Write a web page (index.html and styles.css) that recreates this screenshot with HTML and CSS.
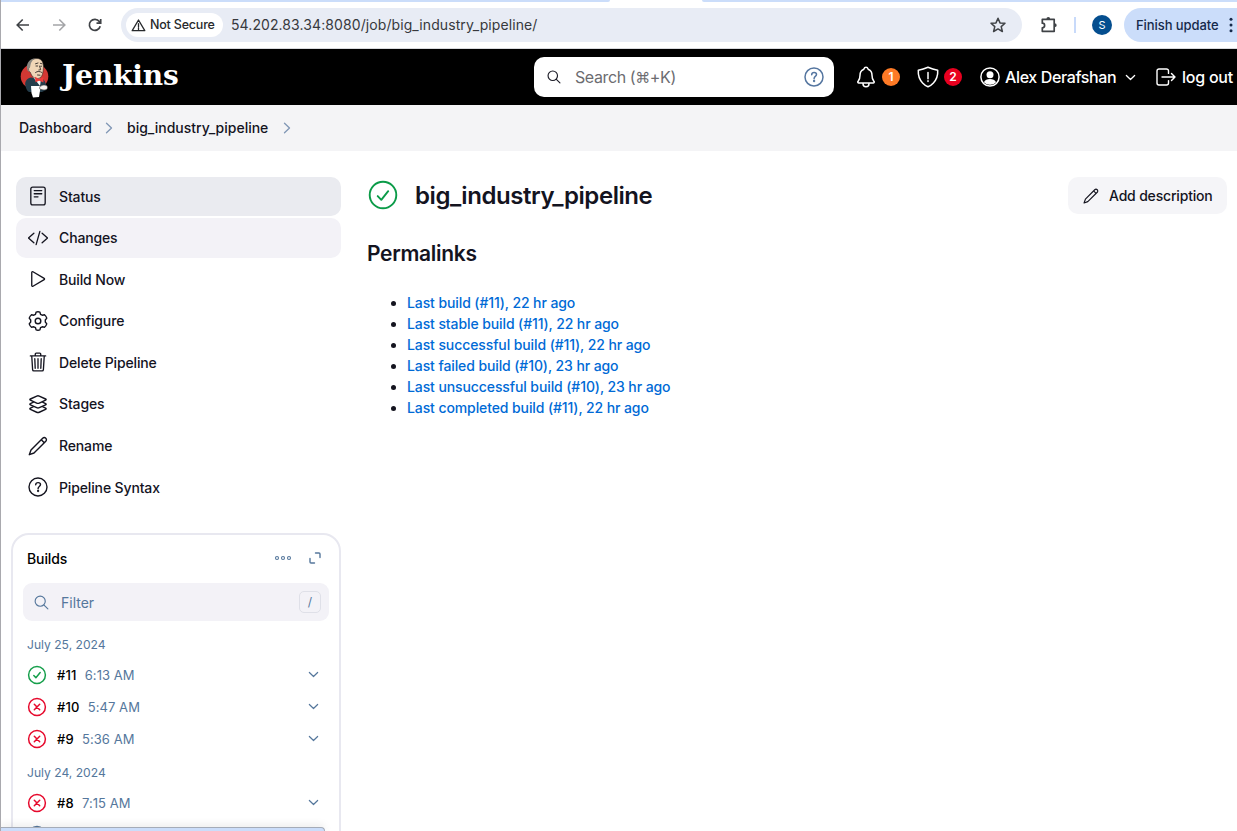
FILE: index.html
```html
<!DOCTYPE html>
<html lang="en">
<head>
<meta charset="utf-8">
<title>big_industry_pipeline [Jenkins]</title>
<link rel="stylesheet" href="styles.css">
</head>
<body>
<svg width="0" height="0" class="defs">
  <symbol id="chev" viewBox="0 0 12 12"><path d="M1.5 3.8 6 8.2l4.500-4.400"/></symbol>
  <symbol id="right" viewBox="0 0 12 12"><path d="M3.500 1.200 8.500 6l-5 4.800"/></symbol>
  <symbol id="ok" viewBox="0 0 20 20"><circle cx="10" cy="10" r="8.400"/><path d="m6.800 10.500 2.100 2.200 4.300-5.200"/></symbol>
  <symbol id="fail" viewBox="0 0 20 20"><circle cx="10" cy="10" r="8.400"/><path d="m7.300 7.300 5.400 5.400m0-5.400-5.400 5.400"/></symbol>
  <symbol id="pencil" viewBox="0 0 20 20"><path d="M1.300 18.700 3 14 14.700 2.200a2.150 2.150 0 0 1 3.100 3.100L6 17zM13.300 3.700l3 3"/></symbol>
  <symbol id="search" viewBox="0 0 16 16"><circle cx="6.600" cy="6.600" r="5.400"/><path d="m10.700 10.700 4.100 4.100"/></symbol>
  <symbol id="help" viewBox="0 0 20 20"><circle cx="10" cy="10" r="9"/><path d="M7.700 7.700C7.800 6.300 8.800 5.600 10.100 5.600c1.400 0 2.400.8 2.400 2 0 1.800-2.400 1.900-2.400 3.800v.3"/><circle cx="10.100" cy="14" r=".45"/></symbol>
</svg>
<div class="window">
  <div class="tabs"><i class="tab-left"></i><i class="tab-right"></i></div>
  <div class="toolbar">
    <svg class="nav back" viewBox="0 0 16 16"><path d="M14 8H2.500M7.700 2.500 2.200 8l5.500 5.500"/></svg>
    <svg class="nav forward" viewBox="0 0 16 16"><path d="M2 8h11.500M8.300 2.500 13.800 8l-5.500 5.500"/></svg>
    <svg class="nav reload" viewBox="0 0 16 16"><path d="M13.200 9.200A5.500 5.500 0 1 1 12.300 4.600L13.700 6M13.700 2v4.200H9.500"/></svg>
    <div class="address">
      <div class="secure"><svg viewBox="0 0 16 14"><path d="M8 1.700 14.700 13H1.300zM8 5.500v3.700m0 1.100v1.400"/></svg><span>Not Secure</span></div>
      <span class="url">54.202.83.34:8080/job/big_industry_pipeline/</span>
      <svg class="star" viewBox="0 0 18 18"><path d="m9 2.200 2 4.700 5 .4-3.800 3.300 1.200 4.900L9 12.900l-4.400 2.600 1.200-4.900L2 7.300l5-.4z"/></svg>
    </div>
    <svg class="puzzle" viewBox="0 0 18 18"><path d="M2.300 3.300h11.900v12H2.300v-3.500a2.300 2.300 0 0 0 0-4.600z"/><path class="fill" d="M6.400 3.200a1.900 2.200 0 0 1 3.800 0zM14.500 7.300a2.200 1.900 0 0 1 0 3.800z"/></svg>
    <i class="divider"></i>
    <span class="avatar">S</span>
    <div class="update"><span>Finish update</span><svg viewBox="0 0 4 16"><circle cx="2" cy="2.300" r="1.500"/><circle cx="2" cy="8" r="1.500"/><circle cx="2" cy="13.700" r="1.500"/></svg></div>
  </div>
  <header class="header">
    <svg class="butler" viewBox="0 0 29 41">
      <ellipse cx="14.500" cy="19.500" rx="13.800" ry="12.800" fill="#d33833"/>
      <path d="M5.500 29C4 24 8 21 11 20.500l12 1.500c3 3 4 7 3 11l-4 2H9c-2-1-3-3.500-3.500-6z" fill="#243d4b"/>
      <path d="m13 20 8 2-1 7z" fill="#f8f8f8"/>
      <path d="M9 10c0-6 3.500-8.500 8-8.500 4.500 0 7 4 6.300 10-.2 6-1.800 9.500-5.300 10-4 .5-6.500-2.500-7.500-6-2-1-2.500-3-1.500-5.500z" fill="#f0d6b7" stroke="#332d29" stroke-width=".6"/>
      <path d="M7.500 13.500C5.500 7 9 2 15 1.300 11.500 3.500 10.500 7 10.300 9.500L8.500 12l.7 3z" fill="#8a8781"/>
      <path d="m15.500 6.800 2.500-.8m2.300.3 1.700.5M16 9h1.600m3 .2h1M19.500 9l1.200 3.700-1.900.3M15.500 15.500c2-1.700 4.500-1.200 6.500 0m-4.500 2.500 2.500.2" fill="none" stroke="#332d29" stroke-width=".9"/>
      <path d="m15 19.800 4 2.200 4.300-1.800.2 5.300-4.300-1.800-3.700 1.600z" fill="#ef3d3a"/>
      <path d="M11 29h9l.5 1.500-1.500 9.500-6 .5-1.500-4.500z" fill="#fff"/>
      <path d="M20 29.500c3-2 7.500-2 7.500 1s-4 3-7.500 1.500z" fill="#f7f3ee" stroke="#332d29" stroke-width=".5"/>
    </svg>
    <span class="brand">Jenkins</span>
    <div class="search"><svg class="mag"><use href="#search"/></svg><span class="hint">Search (<span class="cmd">⌘</span>+K)</span><svg class="help"><use href="#help"/></svg></div>
    <svg class="bell" viewBox="0 0 512 512"><path d="M427.680 351.430C402 320 383.870 304 383.870 217.350 383.870 138 343.350 109.730 310 96c-4.430-1.820-8.600-6-9.950-10.550C294.200 65.540 277.800 48 256 48s-38.210 17.550-44 37.470c-1.350 4.600-5.520 8.710-9.950 10.530-33.390 13.750-73.870 41.920-73.870 121.350C128.130 304 110 320 84.320 351.430 73.680 364.450 83 384 101.610 384h308.880c18.510 0 27.770-19.610 17.190-32.570zM320 384v16a64 64 0 0 1-128 0v-16"/></svg>
    <span class="badge orange">1</span>
    <svg class="shield" viewBox="0 0 512 512"><path d="M463.100 112.370C373.680 96.330 336.710 84.450 256 48c-80.710 36.450-117.680 48.330-207.100 64.370C32.700 369.130 240.580 457.790 256 464c15.420-6.210 223.300-94.870 207.100-351.630zM256 160v135m0 40v18"/></svg>
    <span class="badge red">2</span>
    <svg class="person" viewBox="0 0 20 20"><circle class="ring" cx="10" cy="10" r="9.100"/><circle cx="10" cy="7.700" r="3.500"/><path d="M3.900 15.200c1.100-2.300 3.300-3.200 6.100-3.200s5 .9 6.100 3.200A8 8 0 0 1 10 17.800a8 8 0 0 1-6.100-2.600z"/></svg>
    <span class="user">Alex Derafshan</span>
    <svg class="down"><use href="#chev"/></svg>
    <svg class="exit" viewBox="0 0 20 18"><path d="M12.500 5.400V3a2 2 0 0 0-2-2H3a2 2 0 0 0-2 2v12a2 2 0 0 0 2 2h7.500a2 2 0 0 0 2-2v-2.400M6 9h13M15.500 5.400 19 9l-3.500 3.600"/></svg>
    <span class="logout">log out</span>
  </header>
  <nav class="crumbs"><span class="c1">Dashboard</span><svg><use href="#right"/></svg><span class="c2">big_industry_pipeline</span><svg><use href="#right"/></svg></nav>
  <div class="body">
    <aside class="side">
      <div class="tasks">
        <a class="task active"><svg viewBox="0 0 512 512"><rect x="72" y="28" width="368" height="456" rx="48"/><path d="M160 118h192M160 198h192M160 278h96"/></svg><span>Status</span></a>
        <a class="task hover"><svg viewBox="0 0 512 512"><path d="M150 378 12 256l138-122M362 378l138-122-138-122M304 86l-96 340"/></svg><span>Changes</span></a>
        <a class="task"><svg viewBox="0 0 512 512"><path d="M96 91v330c0 17.440 17 28.520 31 20.160l287-168.370c12.120-7.250 12.120-26.330 0-33.580L127 70.840c-14-8.360-31 2.720-31 20.160z"/></svg><span>Build Now</span></a>
        <a class="task"><svg viewBox="0 0 20 20"><path d="M8.100 1.100Q10 .3 11.900 1.100L12.500 3.300 14.200 4.200 16.500 3.700Q18.100 5 18.800 7.100L17.300 9V11L18.800 12.900Q18.100 15 16.500 16.300L14.200 15.800 12.500 16.700 11.900 18.900Q10 19.700 8.100 18.900L7.500 16.700 5.800 15.800 3.500 16.300Q1.900 15 1.200 12.900L2.700 11V9L1.200 7.100Q1.900 5 3.500 3.700L5.800 4.200 7.500 3.300z" class="thin"/><circle class="thin" cx="10" cy="10" r="2.800"/></svg><span>Configure</span></a>
        <a class="task"><svg viewBox="0 0 512 512"><path d="m96 104 22 348c.95 18.490 14.400 32 32 32h212c17.670 0 30.870-13.510 32-32l22-348M60 100h392M186 100V52a24 24 0 0 1 24-24h92a24 24 0 0 1 24 24v48M256 172v244M174 172l10 244M338 172l-10 244"/></svg><span>Delete Pipeline</span></a>
        <a class="task"><svg viewBox="20 20 472 472"><path d="M434.800 137.650 285.440 69.600c-16.190-7.400-42.700-7.400-58.900 0L77.300 137.650c-17.600 8-17.600 21.090 0 29.090l148 67.500c16.890 7.700 44.700 7.700 61.500 0l148-67.500c17.520-8 17.520-21.100 0-29.090zM160 208l-82.700 37.770c-17.600 8-17.600 21.100 0 29.100l148 67.500c16.890 7.690 44.700 7.690 61.500 0l148-67.500c17.700-8 17.700-21.100.1-29.100L352 208M160 314l-82.800 39.770c-17.600 8-17.600 21.100 0 29.100l148 67.500c16.890 7.690 44.700 7.690 61.500 0l148-67.500c17.700-8 17.500-21.100.1-29.100L352 314"/></svg><span>Stages</span></a>
        <a class="task rename"><svg><use href="#pencil"/></svg><span>Rename</span></a>
        <a class="task help-task"><svg><use href="#help"/></svg><span>Pipeline Syntax</span></a>
      </div>
      <section class="builds">
        <div class="builds-head"><span>Builds</span>
          <svg class="dots" viewBox="0 0 18 6"><circle cx="3" cy="3" r="1.500"/><circle cx="9" cy="3" r="1.500"/><circle cx="15" cy="3" r="1.500"/></svg>
          <svg class="expand" viewBox="0 0 12 12"><path d="M6.500 1H10a1 1 0 0 1 1 1v3.500M5.500 11H2a1 1 0 0 1-1-1V6.500"/></svg></div>
        <div class="filter"><svg><use href="#search"/></svg><span>Filter</span><kbd>/</kbd></div>
        <p class="date">July 25, 2024</p>
        <div class="build"><svg class="ok"><use href="#ok"/></svg><b>#11</b><time>6:13 AM</time><svg class="more"><use href="#chev"/></svg></div>
        <div class="build"><svg class="fail"><use href="#fail"/></svg><b>#10</b><time>5:47 AM</time><svg class="more"><use href="#chev"/></svg></div>
        <div class="build"><svg class="fail"><use href="#fail"/></svg><b>#9</b><time>5:36 AM</time><svg class="more"><use href="#chev"/></svg></div>
        <p class="date">July 24, 2024</p>
        <div class="build"><svg class="fail"><use href="#fail"/></svg><b>#8</b><time>7:15 AM</time><svg class="more"><use href="#chev"/></svg></div>
        <div class="build last"><svg class="aborted" viewBox="0 0 20 20"><circle cx="10" cy="10" r="8.400"/></svg></div>
      </section>
    </aside>
    <main class="main">
      <div class="title"><svg viewBox="0 0 30 30"><circle cx="15" cy="15" r="13.300"/><path d="m9.700 16.100 3.600 3.700 6.900-8.600"/></svg><h1>big_industry_pipeline</h1><button><svg><use href="#pencil"/></svg><span>Add description</span></button></div>
      <h2>Permalinks</h2>
      <ul>
        <li><a>Last build (#11), 22 hr ago</a></li>
        <li><a>Last stable build (#11), 22 hr ago</a></li>
        <li><a>Last successful build (#11), 22 hr ago</a></li>
        <li><a>Last failed build (#10), 23 hr ago</a></li>
        <li><a>Last unsuccessful build (#10), 23 hr ago</a></li>
        <li><a>Last completed build (#11), 22 hr ago</a></li>
      </ul>
    </main>
  </div>
  <div class="statusbar"></div>
</div>
</body>
</html>
```
FILE: styles.css
```css
* { box-sizing: border-box; }
body { margin: 0; font-family: Inter, "Liberation Sans", sans-serif; font-size: 14px; color: #14141f; }
svg { fill: none; stroke: currentColor; stroke-linecap: round; stroke-linejoin: round; flex: none; }
span, time, b { white-space: nowrap; }
.defs { position: absolute; }
.window { position: relative; width: 1237px; height: 831px; overflow: hidden; background: #fff; border-left: 1px solid #a9a9ae; display: flex; flex-direction: column; }

.tabs { height: 2px; display: flex; justify-content: space-between; flex: none; }
.tabs i { background: #cbddfa; height: 2px; }
.tab-left { width: 609px; border-bottom-right-radius: 4px; }
.tab-right { width: 535px; border-bottom-left-radius: 4px; }
.toolbar { height: 47px; flex: none; display: flex; align-items: center; border-bottom: 1px solid #d9dade; padding-left: 14px; color: #3f4246; }
.nav { width: 16px; height: 16px; stroke-width: 1.6; stroke-linecap: butt; stroke-linejoin: miter; }
.forward { margin-left: 20px; color: #a4a5a8; }
.reload { margin-left: 20px; stroke-width: 1.7; }
.address { margin-left: 18px; width: 901px; flex: none; height: 34px; border-radius: 17px; background: #e8ecf5; display: flex; align-items: center; padding: 0 15px 0 5px; }
.secure { width: 97px; height: 24px; border-radius: 12px; background: #fff; display: flex; align-items: center; gap: 4px; padding: 0 0 1px 5px; font-size: 12.500px; font-weight: 500; letter-spacing: -.2px; color: #27292c; }
.secure svg { width: 15px; height: 14px; stroke-width: 1.4; }
.url { margin: -2px 0 0 8px; font-size: 14px; letter-spacing: .09px; color: #37393d; }
.star { width: 18px; height: 18px; margin-left: auto; stroke-width: 1.5; }
.puzzle { width: 18px; height: 18px; margin-left: 18px; stroke-width: 1.7; }
.puzzle .fill { fill: currentColor; stroke: none; }
.divider { width: 2px; height: 16px; flex: none; margin-left: 16px; background: #c8dafa; }
.avatar { width: 20px; height: 20px; flex: none; margin-left: 16px; border-radius: 50%; background: #044e8f; color: #fff; font-size: 11px; line-height: 20px; text-align: center; }
.update { width: 130px; height: 34px; flex: none; margin-left: 12px; border-radius: 17px; background: #cbddfa; display: flex; align-items: center; padding-left: 12px; font-size: 13px; font-weight: 500; letter-spacing: -.08px; color: #15294b; }
.update svg { width: 4px; height: 16px; margin-left: 10px; fill: currentColor; stroke: none; }

.header { height: 56px; flex: none; background: #000; color: #fff; display: flex; align-items: center; padding-left: 19px; font-size: 16px; font-weight: 500; }
.butler { width: 29px; height: 41px; stroke: none; }
.brand { width: 118px; margin: -3px 0 0 11px; padding-left: 2px; font: bold 28px/32px "DejaVu Serif", serif; letter-spacing: -.15px; }
.search { width: 300px; height: 40px; margin-left: 356px; flex: none; border-radius: 10px; background: #fff; display: flex; align-items: center; padding: 0 10px 0 13px; color: #6c6c70; font-weight: 400; }
.mag { width: 14px; height: 14px; margin-right: 14px; color: #1b1b26; stroke-width: 1.3; }
.hint { letter-spacing: -.4px; line-height: 20px; }
.cmd { font: 15px/16px "DejaVu Sans", sans-serif; }
.search .help { width: 20px; height: 20px; margin-left: auto; color: #5576a0; stroke-width: 1.5; }
.bell { width: 24px; height: 24px; margin-left: 20px; stroke-width: 32; }
.badge { width: 18px; height: 18px; border-radius: 50%; text-align: center; font-size: 12px; line-height: 18px; font-weight: 600; }
.orange { background: #fe7a26; margin-left: 4px; }
.red { background: #e8001f; margin-left: 4px; }
.shield { width: 24px; height: 24px; margin-left: 16px; stroke-width: 32; }
.person { width: 20px; height: 20px; margin-left: 18px; fill: currentColor; stroke: none; }
.ring { fill: none; stroke: currentColor; stroke-width: 1.5; }
.user { width: 111px; margin-left: 5px; letter-spacing: -.37px; }
.down { width: 11px; height: 11px; margin: 0 1px 0 9px; stroke-width: 1.4; }
.exit { width: 20px; height: 18px; margin-left: 19px; stroke-width: 1.4; }
.logout { margin-left: 6px; letter-spacing: -.25px; }

.crumbs { height: 46px; flex: none; background: #f4f4f6; display: flex; align-items: center; padding: 0 0 1px 18px; font-weight: 500; }
.crumbs svg { width: 12px; height: 12px; stroke-width: 1.3; color: #8197b5; }
.c1 { width: 73px; margin-right: 11px; }
.c2 { width: 143px; margin-right: 11px; }
.c1 + svg { margin-right: 12px; }

.body { display: flex; flex: 1; min-height: 0; }
.side { width: 340px; padding-top: 26px; flex: none; }
.tasks { display: flex; flex-direction: column; gap: 2px; padding-left: 15px; }
.task { height: 39.600px; border-radius: 10px; display: flex; align-items: center; gap: 11px; padding: 0 0 .4px 12px; font-weight: 500; letter-spacing: -.14px; }
.task svg { width: 20px; height: 20px; stroke-width: 34; }
.task .thin, .rename svg, .help-task svg { stroke-width: 1.4; }
.active { height: 39px; background: #eaebf0; }
.hover { background: #f3f2f7; }
.builds { width: 330px; height: 340px; margin: 25.600px 0 0 10px; border: 2px solid #e8e8f0; border-radius: 18px; padding: 10px; }
.builds-head { height: 27px; display: flex; align-items: center; padding: 0 8px 0 4px; font-weight: 500; letter-spacing: -.1px; color: #000; }
.builds-head svg { color: #55779c; margin-top: -1px; }
.dots { width: 18px; height: 6px; margin-left: auto; stroke-width: 1.1; }
.expand { width: 12px; height: 12px; margin-left: 17px; stroke-width: 1.4; }
.filter { height: 38px; margin-top: 11px; border-radius: 9px; background: #f3f2f7; color: #55779c; display: flex; align-items: center; padding: 1px 8px 0 11px; }
.filter svg { width: 15px; height: 15px; margin-right: 12px; stroke-width: 1.2; }
.filter kbd { width: 22px; height: 22px; border: 1px solid #dfe0e8; border-radius: 5px; margin-left: auto; text-align: center; font: 12px/20px Inter, sans-serif; }
.date { height: 32px; margin: 7px 0 -1px 4px; font-size: 12.100px; line-height: 33px; color: #55779c; }
.build + .date { margin: 1px 0 -1px 4px; }
.build { height: 32px; display: flex; align-items: center; padding: 0 10px 0 4px; font-size: 13px; }
.build > svg { width: 20px; height: 20px; stroke-width: 1.5; }
.build b { margin-left: 10px; color: #000; font-weight: 500; letter-spacing: .2px; }
.build time { margin-left: 8px; color: #55779c; letter-spacing: .07px; }
.build .more { width: 11px; height: 11px; margin-left: auto; stroke-width: 1.3; color: #55779c; }
.build .ok { color: #169f4b; }
.build .fail { color: #e6092c; }
.build .aborted { color: #55779c; }

.main { flex: 1; padding: 26px 10px 0 26px; }
.title { height: 37px; display: flex; align-items: center; }
.title > svg { width: 30px; height: 30px; margin: -1px 1px 0; stroke-width: 1.9; color: #0b9b48; }
h1 { margin: 1px 0 0 16px; font-size: 24px; line-height: 36px; font-weight: 600; letter-spacing: -.43px; }
button { width: 159px; height: 37px; margin-left: auto; border: 0; border-radius: 10px; background: #f5f5f8; padding: 0 0 0 15px; display: flex; align-items: center; gap: 10px; font: 500 14px Inter, sans-serif; letter-spacing: -.18px; color: #14141f; }
button svg { width: 16px; height: 16px; stroke-width: 1.4; }
h2 { margin: 25px 0 0; font-size: 21px; line-height: 30px; font-weight: 600; letter-spacing: -.3px; }
ul { margin: 23px 0 0; padding-left: 40px; line-height: 21px; }
li a { color: #006ad6; font-weight: 500; letter-spacing: -.1px; }

.statusbar { position: absolute; left: -1px; bottom: 0; width: 325px; height: 4px; background: #cbddfa; border-top: 1px solid #a5acb8; border-right: 1px solid #a5acb8; border-top-right-radius: 4px; box-shadow: 0 -1px 8px rgba(0, 0, 0, .14); }
```
